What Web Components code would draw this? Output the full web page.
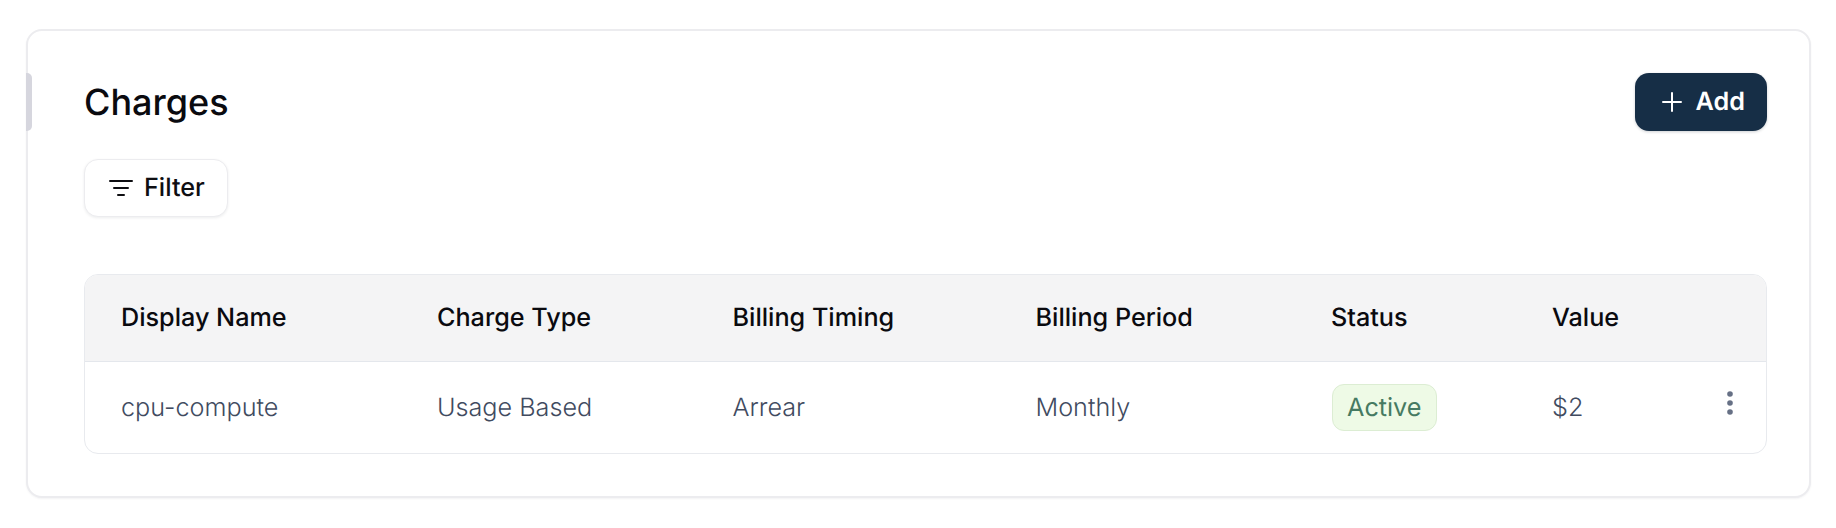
<!doctype html>
<html><head><meta charset="utf-8"><style>
html,body{margin:0;background:#fff}
body{font-family:Inter,"Liberation Sans",sans-serif;padding:29px 25px 30px 26px;text-rendering:geometricPrecision}
</style></head><body>
<charges-card>
  <span slot="title">Charges</span>
  <app-button slot="action" variant="primary" icon="plus">Add</app-button>
  <app-button slot="filter" icon="filter">Filter</app-button>
  <charges-table></charges-table>
</charges-card>
<script>
const ICONS={
 plus:'<svg width="24" height="24" viewBox="0 0 24 24" fill="none" stroke="currentColor" stroke-width="2" stroke-linecap="round"><path d="M12 3v18M3 12h18"/></svg>',
 filter:'<svg width="24" height="24" viewBox="0 0 24 24" fill="none" stroke="currentColor" stroke-width="2" stroke-linecap="round"><path d="M1 5h22M5 12h14M9 19h6"/></svg>'
};
class ChargesCard extends HTMLElement{constructor(){super();this.attachShadow({mode:'open'}).innerHTML=`<style>
:host{display:block;position:relative;box-sizing:border-box;height:469px;border:2px solid #ececef;border-radius:16px;background:#fff;padding:42px 42px 42px 56px;box-shadow:0 1px 2px rgba(16,24,40,.05)}
.handle{position:absolute;left:-2px;top:42px;width:6px;height:58px;background:#d6d6de;border-radius:0 5px 5px 0}
.head{display:flex;justify-content:space-between;align-items:center;height:58px}
h2{margin:0;font-size:36px;font-weight:500;color:#0a0a0f;letter-spacing:0}
.filter{margin-top:28px;display:flex}
.body{margin-top:57px}
</style><div class="handle"></div><div class="head"><h2><slot name="title"></slot></h2><slot name="action"></slot></div><div class="filter"><slot name="filter"></slot></div><div class="body"><slot></slot></div>`}}
class AppButton extends HTMLElement{connectedCallback(){const p=this.getAttribute('variant')==='primary';this.attachShadow({mode:'open'}).innerHTML=`<style>
:host{display:inline-flex;align-items:center;box-sizing:border-box;height:58px;gap:${p?12:11}px;border-radius:14px;font-size:25.2px;font-weight:${p?600:500};padding:0 22px 0 ${p?25:24}px;
${p?'background:#162e46;color:#fff;box-shadow:0 1px 3px rgba(16,24,40,.2);':'background:#fff;color:#0e0e12;border:1.5px solid #ececef;box-shadow:0 1px 3px rgba(16,24,40,.08);'}}
svg{display:block}
</style>${ICONS[this.getAttribute('icon')]}<slot></slot>`}}
class ChargesTable extends HTMLElement{constructor(){super();const H=['Display Name','Charge Type','Billing Timing','Billing Period','Status','Value'];
this.attachShadow({mode:'open'}).innerHTML=`<style>
:host{display:block;border:1.5px solid #e8eaee;border-radius:14px;overflow:hidden;background:#fff}
.row{display:grid;grid-template-columns:316px 295.5px 303px 295.5px 221px 1fr;padding-left:36px;align-items:center}
.h{height:87px;background:#f4f4f5;border-bottom:1.5px solid #e4e7ec;font-size:25.2px;font-weight:520;color:#0a0a0f;box-sizing:border-box}
.d{height:91px;font-size:25.2px;font-weight:350;color:#414b5f}
.last{display:flex;justify-content:space-between;align-items:center;padding-right:33px}
.dots{display:block;margin-top:-10px}
</style><div class="row h">${H.map(t=>`<div>${t}</div>`).join('')}</div>
<div class="row d"><div>cpu-compute</div><div>Usage Based</div><div>Arrear</div><div>Monthly</div><div><status-badge>Active</status-badge></div><div class="last"><span>$2</span><svg class="dots" width="6" height="24" viewBox="0 0 6 24" fill="#667085"><circle cx="3" cy="3" r="2.8"/><circle cx="3" cy="12" r="2.8"/><circle cx="3" cy="21" r="2.8"/></svg></div></div>`}}
class StatusBadge extends HTMLElement{constructor(){super();this.attachShadow({mode:'open'}).innerHTML=`<style>
:host{display:inline-flex;align-items:center;box-sizing:border-box;height:47px;padding:0 14.5px;border:1.5px solid #dcedd3;border-radius:12px;background:#eefae6;color:#467a62;font-size:25.2px;font-weight:400;margin-left:.5px}
</style><slot></slot>`}}
customElements.define('charges-card',ChargesCard);customElements.define('app-button',AppButton);customElements.define('charges-table',ChargesTable);customElements.define('status-badge',StatusBadge);
</script></body></html>
